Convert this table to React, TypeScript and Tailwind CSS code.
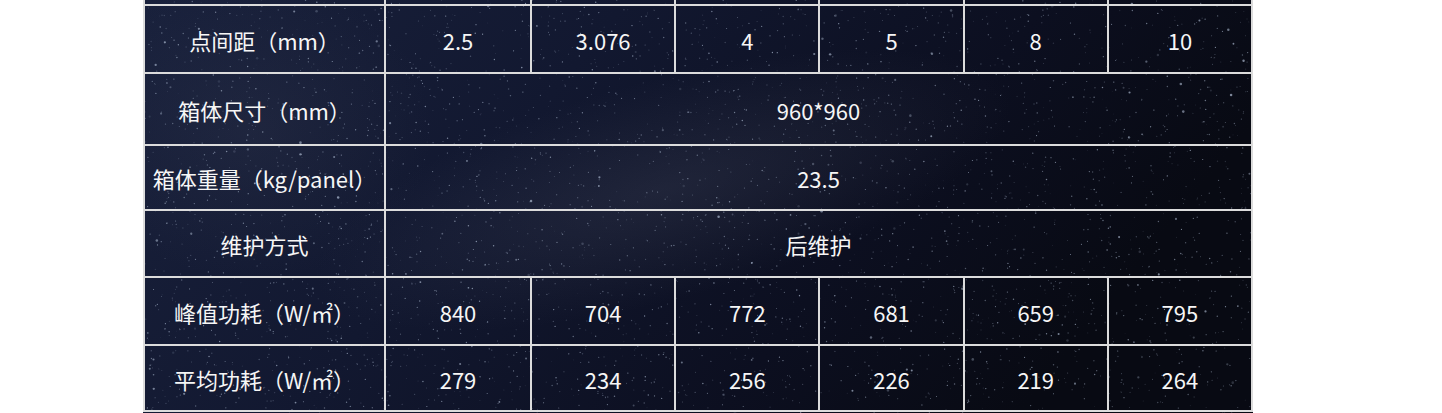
import { useMemo } from "react";

type Row = { label: string; h: string; values: string[] | string };

const rows: Row[] = [
  { label: "点间距（mm）", h: "h-[68px]", values: ["2.5", "3.076", "4", "5", "8", "10"] },
  { label: "箱体尺寸（mm）", h: "h-[72px]", values: "960*960" },
  { label: "箱体重量（kg/panel）", h: "h-[65px]", values: "23.5" },
  { label: "维护方式", h: "h-[67px]", values: "后维护" },
  { label: "峰值功耗（W/㎡）", h: "h-[68px]", values: ["840", "704", "772", "681", "659", "795"] },
  { label: "平均功耗（W/㎡）", h: "h-[66px]", values: ["279", "234", "256", "226", "219", "264"] },
];

function rand(seed: number) {
  let s = seed;
  return () => {
    s = (s * 16807) % 2147483647;
    return (s - 1) / 2147483646;
  };
}

function StarField() {
  const stars = useMemo(() => {
    const r = rand(42);
    const out: { x: number; y: number; rad: number; o: number }[] = [];
    for (let i = 0; i < 4200; i++) {
      out.push({
        x: r() * 1110,
        y: r() * 413,
        rad: r() < 0.95 ? 0.4 + r() * 0.35 : 0.8 + r() * 0.5,
        o: 0.12 + r() * 0.55,
      });
    }
    return out;
  }, []);

  return (
    <svg className="absolute inset-0" width="1110" height="413" viewBox="0 0 1110 413">
      <defs>
        <linearGradient id="sky" x1="0" y1="0" x2="1" y2="0.3">
          <stop offset="0" stopColor="#19213c" />
          <stop offset="0.4" stopColor="#121830" />
          <stop offset="0.75" stopColor="#0c0f20" />
          <stop offset="1" stopColor="#080a13" />
        </linearGradient>
        <radialGradient id="milk" cx="0.5" cy="0.5" r="0.5">
          <stop offset="0" stopColor="#4a4f64" stopOpacity="0.28" />
          <stop offset="1" stopColor="#4a4f64" stopOpacity="0" />
        </radialGradient>
      </defs>
      <rect width="1110" height="413" fill="url(#sky)" />
      <ellipse cx="520" cy="190" rx="360" ry="110" fill="url(#milk)" transform="rotate(-15 520 190)" />
      <ellipse cx="110" cy="130" rx="180" ry="150" fill="url(#milk)" opacity="0.6" />
      {stars.map((s, i) => (
        <circle key={i} cx={s.x} cy={s.y} r={s.rad} fill="#b8c6dc" opacity={s.o} />
      ))}
    </svg>
  );
}

function Cell({ children, className = "" }: { children?: React.ReactNode; className?: string }) {
  return (
    <div className={`flex items-center justify-center border-[#dcdcdc] ${className}`}>{children}</div>
  );
}

export default function App() {
  return (
    <main className="min-h-screen bg-white">
      <div
        className="relative ml-[143px] w-[1110px] h-[412px] text-[22px] text-[#f6f6f6]"
        style={{ fontFamily: '"Noto Sans CJK SC", "Noto Sans", sans-serif' }}
      >
        <StarField />
        <div className="relative flex flex-col border-x-2 border-[#dcdcdc]">
          <div className="flex h-[6px] border-b-2 border-[#dcdcdc]">
            <Cell className="w-[241px] border-r-2" />
            <Cell className="w-[146px] border-r-2" />
            <Cell className="flex-1 border-r-2" />
            <Cell className="flex-1 border-r-2" />
            <Cell className="flex-1 border-r-2" />
            <Cell className="flex-1 border-r-2" />
            <Cell className="flex-1" />
          </div>
          {rows.map((row) => (
            <div key={row.label} className={`flex ${row.h} border-b-2 border-[#dcdcdc]`}>
              <Cell className="w-[241px] border-r-2 whitespace-nowrap pt-[2px]">{row.label}</Cell>
              {Array.isArray(row.values) ? (
                row.values.map((v, i) => (
                  <Cell
                    key={i}
                    className={`pt-[2px] ${i === 0 ? "w-[146px] border-r-2" : i === 5 ? "flex-1" : "flex-1 border-r-2"}`}
                  >
                    {v}
                  </Cell>
                ))
              ) : (
                <Cell className="flex-1 pt-[2px]">{row.values}</Cell>
              )}
            </div>
          ))}
        </div>
      </div>
    </main>
  );
}
